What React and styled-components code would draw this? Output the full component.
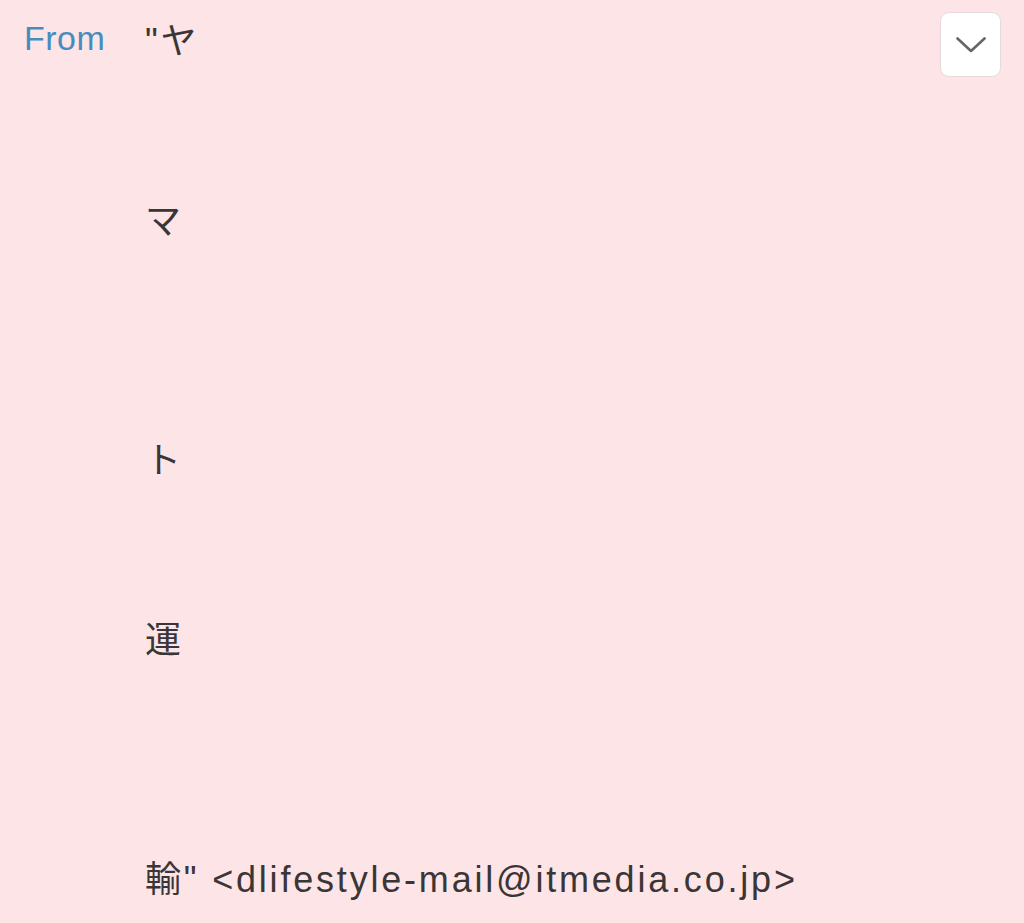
import React from 'react'
import styled, { createGlobalStyle } from 'styled-components'

const GlobalStyle = createGlobalStyle`
  html, body {
    margin: 0;
    padding: 0;
    background: #fde4e7;
  }
`

const lines = [
  { text: '"ヤ', gap: 0 },
  { text: 'マ', gap: 120 },
  { text: 'ト', gap: 179 },
  { text: '運', gap: 120 },
  { text: '輸" <dlifestyle-mail@itmedia.co.jp>', gap: 179 },
]

function App() {
  return (
    <>
      <GlobalStyle />
      <Header>
        <Label>From</Label>
        <Value>
          {lines.map((l, i) => (
            <Line key={i} gap={l.gap}>{l.text}</Line>
          ))}
        </Value>
        <Toggle aria-label="expand">
          <svg width="30" height="16" viewBox="0 0 30 16" fill="none">
            <path d="M1.5 1.5 L15 14 L28.5 1.5" stroke="#666" strokeWidth="2.6" strokeLinecap="round" strokeLinejoin="round" />
          </svg>
        </Toggle>
      </Header>
    </>
  )
}

export default App

const Header = styled.div`
  display: flex;
  align-items: flex-start;
  min-height: 923px;
  box-sizing: border-box;
  padding: 12px 24px 0 24px;
  background: #fde4e7;
`

const Label = styled.div`
  width: 121px;
  flex-shrink: 0;
  margin-top: -4px;
  line-height: 60px;
  font-family: "Liberation Sans", "Noto Sans CJK JP", sans-serif;
  font-size: 34px;
  letter-spacing: 0.5px;
  color: #468dbf;
`

const Value = styled.div`
  flex: 1;
  display: flex;
  flex-direction: column;
`

const Line = styled.div`
  margin-top: ${props => props.gap}px;
  line-height: 60px;
  height: 60px;
  white-space: nowrap;
  font-family: "Liberation Sans", "Noto Sans CJK JP", sans-serif;
  font-size: 36px;
  letter-spacing: 2.8px;
  color: #3a3536;
`

const Toggle = styled.button`
  width: 61px;
  height: 65px;
  flex-shrink: 0;
  margin-right: -1px;
  display: flex;
  align-items: center;
  justify-content: center;
  padding: 0;
  background: #fff;
  border: 1.5px solid #e6dadd;
  border-radius: 9px;
  cursor: pointer;
`
